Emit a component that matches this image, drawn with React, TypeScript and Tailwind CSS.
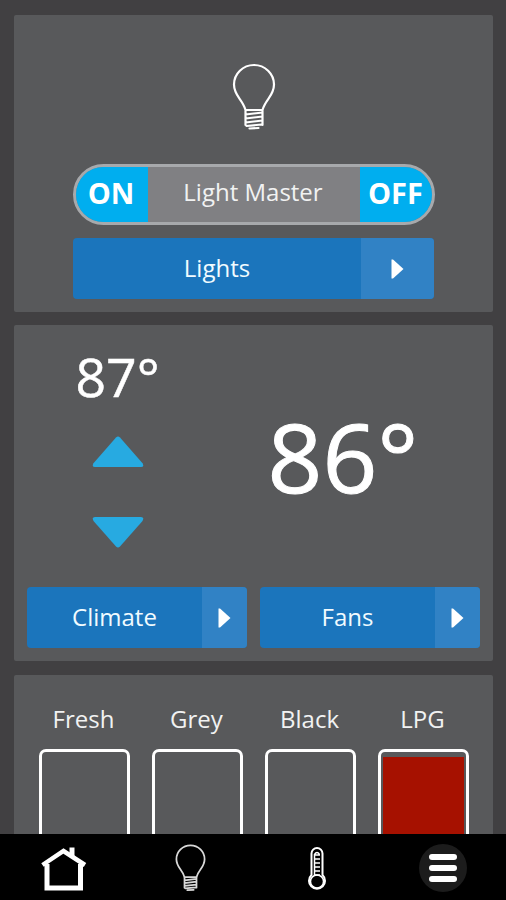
import type { ReactNode } from 'react';

const tanks = [
  { label: 'Fresh', full: false },
  { label: 'Grey', full: false },
  { label: 'Black', full: false },
  { label: 'LPG', full: true },
];

function Bulb({ className, strokeWidth }: { className: string; strokeWidth: number }) {
  return (
    <svg
      viewBox="0 0 44 68"
      fill="none"
      stroke="currentColor"
      strokeWidth={strokeWidth}
      strokeLinejoin="round"
      strokeLinecap="round"
      className={className}
    >
      <path d="M13.500 47C10.500 36 2 33 2 21.500A20 19.500 0 0 1 42 21.500C42 33 33.500 36 30.500 47Z" />
      <path d="M13.500 51.500L30.500 49.500M13.500 55.500L30.500 53.500M13.500 59.500L30.500 57.500M14.500 63L29.500 61.500M17.500 65.500L26.500 65M13.500 48V62M30.500 48V62" />
    </svg>
  );
}

function NavButton({ arrowWidth, label, className }: { arrowWidth: string; label: string; className: string }) {
  return (
    <button className={`flex h-[61px] overflow-hidden rounded bg-[#1b75bc] text-2xl text-[#f1fbff] ${className}`}>
      <span className="flex h-full flex-1 items-center justify-center pb-px">{label}</span>
      <span className={`flex h-full items-center justify-center bg-[#3182c5] ${arrowWidth}`}>
        <svg viewBox="0 0 13 20" className="h-5 w-[13px]" fill="white">
          <path d="M0.500 0.500H2L12.500 10L2 19.500H0.500Z" />
        </svg>
      </span>
    </button>
  );
}

function Panel({ className, children }: { className: string; children: ReactNode }) {
  return <section className={`w-[479px] shrink-0 rounded-[2px] bg-[#58595b] ${className}`}>{children}</section>;
}

export default function App() {
  return (
    <div className="flex h-[900px] w-[506px] flex-col overflow-hidden bg-[#414042] font-['Open_Sans','Noto_Sans',sans-serif] text-white">
      <main className="flex min-h-0 flex-1 flex-col gap-3.5 overflow-hidden pt-[15px] pl-3.5">
        {/* Lights */}
        <Panel className="flex h-[297px] flex-col items-center pt-12">
          <Bulb className="h-[68px] w-11" strokeWidth={2.200} />
          <div className="mt-[33px] flex h-[61px] w-[362px] overflow-hidden rounded-full border-[3px] border-[#a7a9ac] bg-[#808083]">
            <button className="flex w-[72px] items-center justify-center bg-[#00aeef] pr-px pb-[3px] text-[29px] font-bold">
              ON
            </button>
            <span className="flex flex-1 items-center justify-center pr-px pb-1.5 text-2xl text-[#f1f2f2]">Light Master</span>
            <button className="flex w-[72px] items-center justify-center bg-[#00aeef] pb-[3px] text-[29px] font-bold">
              OFF
            </button>
          </div>
          <NavButton label="Lights" className="mt-[13px] w-[361px]" arrowWidth="w-[73px]" />
        </Panel>

        {/* Climate */}
        <Panel className="-mt-px flex h-[336px] flex-col">
          <div className="flex h-[262px]">
            <div className="flex w-[207px] flex-col items-center pt-[15px]">
              <div className="text-[53.500px] leading-[74px] [-webkit-text-stroke:0.5px_white]">87°</div>
              <button className="mt-[22px]">
                <svg viewBox="0 0 52 32" preserveAspectRatio="none" className="h-[31px] w-[52px]" fill="#27aae1">
                  <path d="M24 1.500Q26 -0.500 28 1.500L50.500 28Q52.500 32 49 32H3Q-0.500 32 1.500 28Z" />
                </svg>
              </button>
              <button className="mt-[50px]">
                <svg viewBox="0 0 52 32" preserveAspectRatio="none" className="h-[31px] w-[52px]" fill="#27aae1">
                  <path d="M24 30.500Q26 32.500 28 30.500L50.500 4Q52.500 0 49 0H3Q-0.500 0 1.500 4Z" />
                </svg>
              </button>
            </div>
            <div className="flex flex-1 justify-center pt-[65px] pr-[28px] text-[96px] leading-[131px] [-webkit-text-stroke:1px_white]">
              86°
            </div>
          </div>
          <div className="flex gap-[13px] pl-[13px]">
            <NavButton label="Climate" className="w-[220px]" arrowWidth="w-[45px]" />
            <NavButton label="Fans" className="w-[220px]" arrowWidth="w-[45px]" />
          </div>
        </Panel>

        {/* Tanks */}
        <Panel className="flex h-[420px] gap-[22px] pt-7 pl-[25px]">
          {tanks.map((tank) => (
            <div key={tank.label} className="flex w-[91px] flex-col items-center">
              <span className="pr-0.5 text-2xl leading-8 text-[#f1f2f2]">{tank.label}</span>
              <div className="mt-3.5 h-[300px] w-full rounded-[7px] border-[3px] border-white px-0.5 pt-[5px]">
                {tank.full && <div className="h-full bg-[#a61100]" />}
              </div>
            </div>
          ))}
        </Panel>
      </main>

      {/* Bottom navigation */}
      <nav className="flex h-[66px] shrink-0 items-center bg-black">
        <button className="flex w-[127px] justify-center pt-1">
          <svg viewBox="0 0 46 46" className="h-[46px] w-[46px]" fill="none" stroke="white" strokeWidth="4">
            <path d="M6 18V42H39.500V18" strokeWidth="5" />
            <path d="M1.500 19L22.500 5L44 19" strokeWidth="4.500" />
            <path d="M31 10V1.500" strokeWidth="5" />
          </svg>
        </button>
        <button className="flex w-[127px] justify-center pt-0.5">
          <Bulb className="h-12 w-[31px] text-[#d8d8d8]" strokeWidth={2.500} />
        </button>
        <button className="flex w-[126px] justify-center pt-1">
          <svg viewBox="0 0 18 44" className="h-11 w-[18px]" fill="none" stroke="white">
            <path d="M3.500 28V6.500A5.500 5.500 0 0 1 14.500 6.500V28A8 8 0 1 1 3.500 28Z" strokeWidth="2" />
            <path d="M6.500 29V7.500Q9 3.500 11.500 7.500M6.500 8H12M6.500 12H12M6.500 16H12M6.500 20H12M6.500 24H12M6.500 28H12" strokeWidth="1.500" />
            <circle cx="9" cy="34.500" r="6.500" strokeWidth="1.500" />
          </svg>
        </button>
        <button className="flex w-[126px] justify-center pt-0.5">
          <span className="flex h-12 w-12 flex-col items-center justify-center gap-[5px] rounded-full bg-[#1c1c1c]">
            <span className="h-1.5 w-7 rounded-full bg-white" />
            <span className="h-1.5 w-7 rounded-full bg-white" />
            <span className="h-1.5 w-7 rounded-full bg-white" />
          </span>
        </button>
      </nav>
    </div>
  );
}
